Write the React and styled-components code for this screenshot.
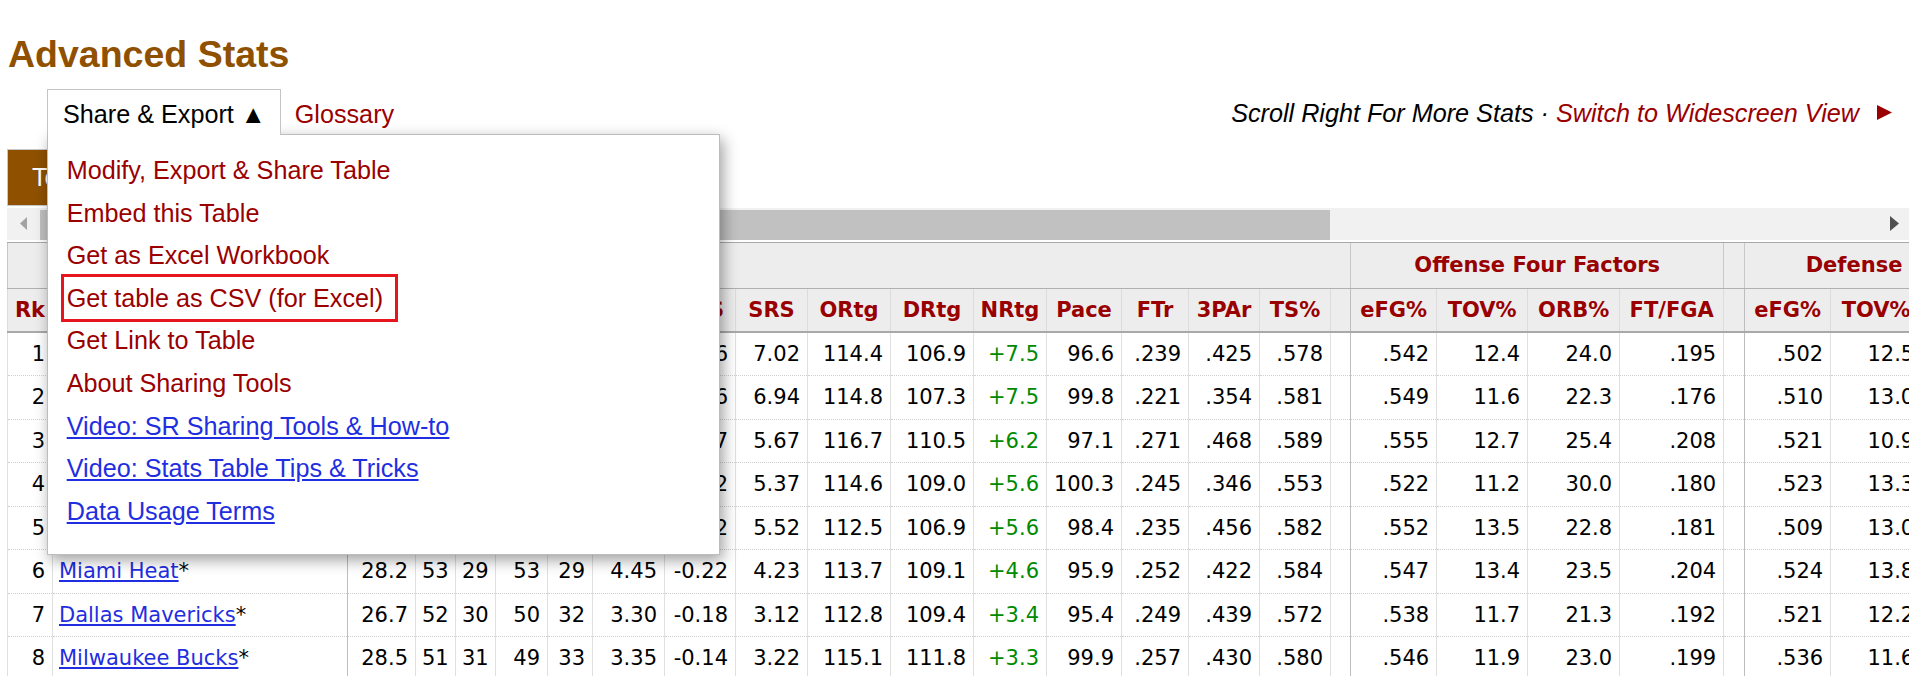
import React from 'react';
import styled, { createGlobalStyle } from 'styled-components';

const GlobalStyle = createGlobalStyle`
    body {
        margin: 0;
        background: #fff;
        font-family: "Liberation Sans", Arial, sans-serif;
    }
`

const Page = styled.div`
    width: 1902px;
    padding: 36px 0 0 7px;
`

const Title = styled.h2`
    margin: 0;
    padding-left: 1px;
    font: 700 37.5px/1 "Liberation Sans", Arial, sans-serif;
    color: #8f5000;
`

const Tools = styled.div`
    display: flex;
    align-items: flex-start;
    margin-top: 15px;
    padding-left: 40px;
    font-size: 25.2px;
    position: relative;
    z-index: 10;
`

const ShareMenu = styled.div`
    position: relative;
`

const ShareTab = styled.div`
    position: relative;
    z-index: 3;
    background: #fff;
    border: 1px solid #c4c4c4;
    border-bottom: none;
    padding: 4px 14px 1px 15px;
    line-height: 40px;
    color: #000;
`

const Dropdown = styled.ul`
    position: absolute;
    z-index: 2;
    left: 0;
    top: calc(100% - 1px);
    width: 673px;
    box-sizing: border-box;
    margin: 0;
    list-style: none;
    background: #fff;
    border: 1px solid #bdbdbd;
    padding: 14.5px 0 22px 18.7px;
    box-shadow: 3px 5px 14px rgba(0, 0, 0, 0.38);
`

const Item = styled.li`
    line-height: 42.6px;
    white-space: nowrap;
`

const ItemLink = styled.a`
    display: inline-block;
    color: ${p => (p.$video ? '#1f2ee0' : '#9a0000')};
    text-decoration: ${p => (p.$video ? 'underline' : 'none')};
    text-underline-offset: 2px;
    ${p => p.$marked && `
        margin-left: -3px;
        padding: 0 12px 0 3px;
        outline: 3px solid #e5161e;
    `}
`

const Glossary = styled.a`
    margin-left: 14px;
    padding-top: 5px;
    line-height: 40px;
    color: #9a0000;
    text-decoration: none;
`

const Note = styled.div`
    margin-left: auto;
    padding: 4px 16px 0 0;
    line-height: 40px;
    font-style: italic;
    color: #000;
    display: flex;
    align-items: center;
`

const NoteLink = styled.a`
    color: #9a0000;
    text-decoration: none;
`

const Filter = styled.div`
    margin-top: 14px;
    display: flex;
`

const FilterButton = styled.div`
    height: 57px;
    box-sizing: border-box;
    padding: 0 24px;
    background: #8f5000;
    border: 1px solid #c8c8c8;
    color: #fff;
    font-size: 25.2px;
    line-height: 55px;
`

const ScrollBar = styled.div`
    margin-top: 2px;
    height: 32px;
    width: 1902px;
    background: #f1f1f1;
    display: flex;
    align-items: stretch;
`

const ScrollArrow = styled.div`
    width: ${p => p.$w}px;
    display: flex;
    align-items: center;
    justify-content: center;
`

const Thumb = styled.div`
    margin-top: 2px;
    width: 1290px;
    background: #c1c1c1;
`

const TableWrap = styled.div`
    margin-top: 2px;
    width: 1902px;
    overflow: hidden;
`

const Table = styled.table`
    border-collapse: collapse;
    table-layout: fixed;
    width: ${p => p.$width}px;
    font-family: "DejaVu Sans", Verdana, sans-serif;
    font-size: 21px;
    border-left: 1px solid #c8c8c8;
`

const OverHeader = styled.th`
    height: 45px;
    padding: 0;
    background: #ededed;
    border-top: 1px solid #a9a9a9;
    border-bottom: 1px solid #b0b0b0;
    border-left: ${p => (p.$edge ? '1px solid #c8c8c8' : 'none')};
    color: #990000;
    font-weight: 700;
    text-align: center;
    white-space: nowrap;
    overflow: visible;
`

const HeadCell = styled.th`
    height: 42px;
    padding: 0;
    background: #ededed;
    border-bottom: 2px solid #a9a9a9;
    border-left: 1px solid ${p => (p.$group ? '#bdbdbd' : '#dcdcdc')};
    color: #990000;
    font-weight: 700;
    text-align: center;
    white-space: nowrap;
    overflow: hidden;
`

const Cell = styled.td`
    height: 42.5px;
    padding: 0 7px 0 6px;
    border-top: 1px dotted #cfcfcf;
    border-left: 1px solid ${p => (p.$group ? '#bdbdbd' : '#e0e0e0')};
    text-align: ${p => p.$align || 'right'};
    color: ${p => (p.$good ? '#008a00' : '#000')};
    white-space: nowrap;
    overflow: hidden;
`

const TeamLink = styled.a`
    color: #1f2ee0;
    text-decoration: underline;
    text-underline-offset: 2px;
`

const Col = styled.col`
    width: ${p => p.$w}px;
`

const columns = [
    { label: 'Rk', w: 45 },
    { label: 'Team', w: 295 },
    { label: 'Age', w: 68, group: true },
    { label: 'W', w: 40 },
    { label: 'L', w: 40 },
    { label: 'PW', w: 52 },
    { label: 'PL', w: 45 },
    { label: 'MOV', w: 72 },
    { label: 'SOS', w: 71 },
    { label: 'SRS', w: 72 },
    { label: 'ORtg', w: 83 },
    { label: 'DRtg', w: 83 },
    { label: 'NRtg', w: 73 },
    { label: 'Pace', w: 75 },
    { label: 'FTr', w: 67 },
    { label: '3PAr', w: 71 },
    { label: 'TS%', w: 71 },
    { label: '', w: 20 },
    { label: 'eFG%', w: 86, group: true },
    { label: 'TOV%', w: 91 },
    { label: 'ORB%', w: 92 },
    { label: 'FT/FGA', w: 104 },
    { label: '', w: 21 },
    { label: 'eFG%', w: 86, group: true },
    { label: 'TOV%', w: 91 },
    { label: 'DRB%', w: 92 },
    { label: 'FT/FGA', w: 104 },
]

const teams = [
    ['1', 'Boston Celtics', '26.8', '51', '31', '56', '26', '7.28', '-0.26', '7.02', '114.4', '106.9', '+7.5', '96.6', '.239', '.425', '.578', '', '.542', '12.4', '24.0', '.195', '', '.502', '12.5', '78.4', '.190'],
    ['2', 'Phoenix Suns', '27.6', '64', '18', '59', '23', '7.20', '-0.26', '6.94', '114.8', '107.3', '+7.5', '99.8', '.221', '.354', '.581', '', '.549', '11.6', '22.3', '.176', '', '.510', '13.0', '77.7', '.188'],
    ['3', 'Utah Jazz', '28.4', '49', '33', '55', '27', '5.84', '-0.17', '5.67', '116.7', '110.5', '+6.2', '97.1', '.271', '.468', '.589', '', '.555', '12.7', '25.4', '.208', '', '.521', '10.9', '79.0', '.164'],
    ['4', 'Memphis Grizzlies', '24.5', '56', '26', '54', '28', '5.59', '-0.22', '5.37', '114.6', '109.0', '+5.6', '100.3', '.245', '.346', '.553', '', '.522', '11.2', '30.0', '.180', '', '.523', '13.3', '75.4', '.197'],
    ['5', 'Golden State Warriors', '28.2', '53', '29', '55', '27', '5.74', '-0.22', '5.52', '112.5', '106.9', '+5.6', '98.4', '.235', '.456', '.582', '', '.552', '13.5', '22.8', '.181', '', '.509', '13.0', '77.5', '.199'],
    ['6', 'Miami Heat', '28.2', '53', '29', '53', '29', '4.45', '-0.22', '4.23', '113.7', '109.1', '+4.6', '95.9', '.252', '.422', '.584', '', '.547', '13.4', '23.5', '.204', '', '.524', '13.8', '78.6', '.184'],
    ['7', 'Dallas Mavericks', '26.7', '52', '30', '50', '32', '3.30', '-0.18', '3.12', '112.8', '109.4', '+3.4', '95.4', '.249', '.439', '.572', '', '.538', '11.7', '21.3', '.192', '', '.521', '12.2', '79.6', '.189'],
    ['8', 'Milwaukee Bucks', '28.5', '51', '31', '49', '33', '3.35', '-0.14', '3.22', '115.1', '111.8', '+3.3', '99.9', '.257', '.430', '.580', '', '.546', '11.9', '23.0', '.199', '', '.536', '11.6', '80.3', '.164'],
]

const menuItems = [
    { text: 'Modify, Export & Share Table' },
    { text: 'Embed this Table' },
    { text: 'Get as Excel Workbook' },
    { text: 'Get table as CSV (for Excel)', marked: true },
    { text: 'Get Link to Table' },
    { text: 'About Sharing Tools' },
    { text: 'Video: SR Sharing Tools & How-to', video: true },
    { text: 'Video: Stats Table Tips & Tricks', video: true },
    { text: 'Data Usage Terms', video: true },
]

const tableWidth = columns.reduce((s, c) => s + c.w, 0)

function StatsTable() {
    return (
        <TableWrap>
            <Table $width={tableWidth}>
                <colgroup>
                    {columns.map((c, i) => <Col key={i} $w={c.w} />)}
                </colgroup>
                <thead>
                    <tr>
                        <OverHeader colSpan={18} />
                        <OverHeader colSpan={4} $edge>Offense Four Factors</OverHeader>
                        <OverHeader $edge />
                        <OverHeader colSpan={4} $edge>Defense Four Factors</OverHeader>
                    </tr>
                    <tr>
                        {columns.map((c, i) => (
                            <HeadCell key={i} $group={c.group}>{c.label}</HeadCell>
                        ))}
                    </tr>
                </thead>
                <tbody>
                    {teams.map(row => (
                        <tr key={row[0]}>
                            {row.map((v, i) => {
                                if (i === 1) {
                                    return (
                                        <Cell key={i} $align="left">
                                            <TeamLink href="#">{v}</TeamLink>*
                                        </Cell>
                                    )
                                }
                                return (
                                    <Cell key={i} $group={columns[i].group} $good={i === 12}>{v}</Cell>
                                )
                            })}
                        </tr>
                    ))}
                </tbody>
            </Table>
        </TableWrap>
    )
}

export default function App() {
    return (
        <Page>
            <GlobalStyle />
            <Title>Advanced Stats</Title>
            <Tools>
                <ShareMenu>
                    <ShareTab>Share &amp; Export ▲</ShareTab>
                    <Dropdown>
                        {menuItems.map(m => (
                            <Item key={m.text}>
                                <ItemLink href="#" $video={m.video} $marked={m.marked}>{m.text}</ItemLink>
                            </Item>
                        ))}
                    </Dropdown>
                </ShareMenu>
                <Glossary href="#">Glossary</Glossary>
                <Note>
                    Scroll Right For More Stats&nbsp;·&nbsp;<NoteLink href="#">Switch to Widescreen View</NoteLink>
                    <svg width="17" height="17" viewBox="0 0 17 17" style={{ marginLeft: 17 }}>
                        <polygon points="1,1 16,8.5 1,16" fill="#9a0000" />
                    </svg>
                </Note>
            </Tools>
            <Filter>
                <FilterButton>Teams</FilterButton>
            </Filter>
            <ScrollBar>
                <ScrollArrow $w={33}>
                    <svg width="8" height="13" viewBox="0 0 8 13"><polygon points="7,0 0,6.5 7,13" fill="#a3a3a3" /></svg>
                </ScrollArrow>
                <Thumb />
                <div style={{ flex: 1 }} />
                <ScrollArrow $w={30}>
                    <svg width="9" height="15" viewBox="0 0 9 15"><polygon points="0,0 9,7.5 0,15" fill="#505050" /></svg>
                </ScrollArrow>
            </ScrollBar>
            <StatsTable />
        </Page>
    )
}
